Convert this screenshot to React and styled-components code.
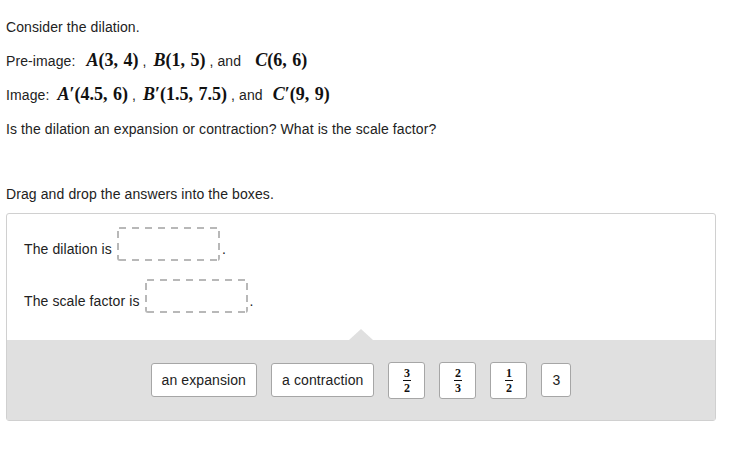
import React from 'react';
import styled, { createGlobalStyle } from 'styled-components';

const GlobalStyle = createGlobalStyle`
  body {
    margin: 0;
    background: #fff;
    font-family: "Liberation Sans", Arial, sans-serif;
    font-size: 14px;
    color: #222;
  }
`;

const DASH = '#b8b8b8';

const Page = styled.div`
  padding: 17px 6px 0;
  width: 710px;
  letter-spacing: 0.1px;
`;

const Para = styled.p`
  margin: 0 0 ${(props) => props.gap || 14}px;
  line-height: 20px;
`;

const Math = styled.span`
  font-family: "Liberation Serif", "Times New Roman", serif;
  font-size: 18px;
  font-weight: bold;
  line-height: 0;
  letter-spacing: 0;
  word-spacing: 1px;
  color: #111;
  padding: 0 4px 0 ${(props) => props.pl ?? 3}px;
`;

const V = styled.i`
  font-style: italic;
`;

const Panel = styled.div`
  box-sizing: border-box;
  width: 710px;
  border: 1px solid #d0d0d0;
  border-radius: 3px;
`;

const Targets = styled.div`
  display: flex;
  flex-direction: column;
  gap: 18px;
  padding: 13px 17px 27px;
`;

const TargetRow = styled.div`
  display: flex;
  align-items: flex-end;
`;

const Label = styled.span`
  line-height: 16px;
  margin-bottom: 4px;
  white-space: pre;
`;

const DropBox = styled.span`
  box-sizing: border-box;
  width: 103px;
  height: 34px;
  margin: 0 2px 0 1px;
  border-radius: 3px;
  background:
    linear-gradient(to right, ${DASH} 7px, transparent 7px) 2px 0 / 13px 2px repeat-x,
    linear-gradient(to right, ${DASH} 7px, transparent 7px) 2px 100% / 13px 2px repeat-x,
    linear-gradient(to bottom, ${DASH} 7px, transparent 7px) 0 4px / 2px 12px repeat-y,
    linear-gradient(to bottom, ${DASH} 7px, transparent 7px) 100% 4px / 2px 12px repeat-y;
`;

const Tray = styled.div`
  position: relative;
  height: 80px;
  background: #e0e0e0;
  display: flex;
  justify-content: center;
  align-items: center;
  gap: 14px;

  &::before {
    content: '';
    position: absolute;
    left: 50%;
    top: -11px;
    margin-left: -12px;
    border-left: 12px solid transparent;
    border-right: 12px solid transparent;
    border-bottom: 11px solid #e0e0e0;
  }
`;

const Choice = styled.div`
  box-sizing: border-box;
  height: ${(props) => (props.tall ? 37 : 34)}px;
  min-width: ${(props) => (props.tall ? 37 : 30)}px;
  padding: 0 ${(props) => (props.tall ? 0 : 10)}px;
  display: flex;
  align-items: center;
  justify-content: center;
  background: #fff;
  border: 1px solid #a6a6a6;
  border-radius: 3px;
  font-size: 14px;
  color: #222;
`;

const Frac = styled.span`
  display: inline-flex;
  flex-direction: column;
  align-items: center;
  font-family: "Liberation Serif", "Times New Roman", serif;
  font-weight: bold;
  font-size: 12px;
  line-height: 10px;
  color: #111;
`;

const Den = styled.span`
  border-top: 1px solid #111;
  padding: 2px 1px 0;
  margin-top: 2px;
`;

const Fraction = ({ n, d }) => (
  <Frac>
    <span>{n}</span>
    <Den>{d}</Den>
  </Frac>
);

const choices = [
  { text: 'an expansion' },
  { text: 'a contraction' },
  { n: 3, d: 2 },
  { n: 2, d: 3 },
  { n: 1, d: 2 },
  { text: '3' },
];

export default function App() {
  return (
    <>
      <GlobalStyle />
      <Page>
        <Para>Consider the dilation.</Para>
        <Para>
          Pre-image: <Math pl={7}><V>A</V>(3, 4)</Math>, <Math><V>B</V>(1, 5)</Math>, and <Math pl={10}><V>C</V>(6, 6)</Math>
        </Para>
        <Para>
          Image: <Math pl={4}><V>A</V>′(4.5, 6)</Math>, <Math><V>B</V>′(1.5, 7.5)</Math>, and <Math pl={6}><V>C</V>′(9, 9)</Math>
        </Para>
        <Para gap={45}>Is the dilation an expansion or contraction? What is the scale factor?</Para>
        <Para gap={9}>Drag and drop the answers into the boxes.</Para>
        <Panel>
          <Targets>
            <TargetRow>
              <Label>The dilation is </Label>
              <DropBox />
              <Label>.</Label>
            </TargetRow>
            <TargetRow>
              <Label>The scale factor is </Label>
              <DropBox />
              <Label>.</Label>
            </TargetRow>
          </Targets>
          <Tray>
            {choices.map((c, i) =>
              c.text ? (
                <Choice key={i}>{c.text}</Choice>
              ) : (
                <Choice key={i} tall>
                  <Fraction n={c.n} d={c.d} />
                </Choice>
              )
            )}
          </Tray>
        </Panel>
      </Page>
    </>
  );
}
